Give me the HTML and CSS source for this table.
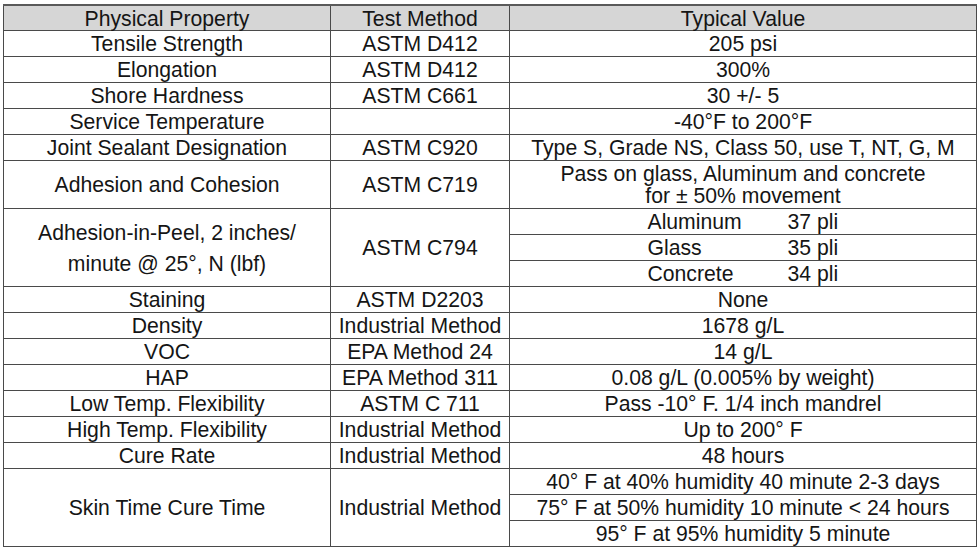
FILE: index.html
```html
<!DOCTYPE html>
<html>
<head>
<meta charset="utf-8">
<link rel="stylesheet" href="styles.css">
</head>
<body>
<table class="spec">
  <colgroup>
    <col class="c1"><col class="c2"><col class="c3">
  </colgroup>
  <thead>
    <tr class="head"><th>Physical Property</th><th>Test Method</th><th>Typical Value</th></tr>
  </thead>
  <tbody>
    <tr><td>Tensile Strength</td><td>ASTM D412</td><td>205 psi</td></tr>
    <tr><td>Elongation</td><td>ASTM D412</td><td>300%</td></tr>
    <tr><td>Shore Hardness</td><td>ASTM C661</td><td>30 +/- 5</td></tr>
    <tr><td>Service Temperature</td><td></td><td>-40°F to 200°F</td></tr>
    <tr><td>Joint Sealant Designation</td><td>ASTM C920</td><td>Type S, Grade NS, Class 50, use T, NT, G, M</td></tr>
    <tr><td>Adhesion and Cohesion</td><td>ASTM C719</td><td class="two">Pass on glass, Aluminum and concrete<br>for ± 50% movement</td></tr>
    <tr><td rowspan="3" class="tall">Adhesion-in-Peel, 2 inches/<br>minute @ 25°, N (lbf)</td><td rowspan="3">ASTM C794</td><td><span class="pair"><span class="lbl">Aluminum</span><span class="num">37 pli</span></span></td></tr>
    <tr><td><span class="pair"><span class="lbl">Glass</span><span class="num">35 pli</span></span></td></tr>
    <tr><td><span class="pair"><span class="lbl">Concrete</span><span class="num">34 pli</span></span></td></tr>
    <tr><td>Staining</td><td>ASTM D2203</td><td>None</td></tr>
    <tr><td>Density</td><td>Industrial Method</td><td>1678 g/L</td></tr>
    <tr><td>VOC</td><td>EPA Method 24</td><td>14 g/L</td></tr>
    <tr><td>HAP</td><td>EPA Method 311</td><td>0.08 g/L (0.005% by weight)</td></tr>
    <tr><td>Low Temp. Flexibility</td><td>ASTM C 711</td><td>Pass -10° F. 1/4 inch mandrel</td></tr>
    <tr><td>High Temp. Flexibility</td><td>Industrial Method</td><td>Up to 200° F</td></tr>
    <tr><td>Cure Rate</td><td>Industrial Method</td><td>48 hours</td></tr>
    <tr><td rowspan="3">Skin Time Cure Time</td><td rowspan="3">Industrial Method</td><td>40° F at 40% humidity 40 minute 2-3 days</td></tr>
    <tr><td>75° F at 50% humidity 10 minute &lt; 24 hours</td></tr>
    <tr><td>95° F at 95% humidity 5 minute</td></tr>
  </tbody>
</table>
</body>
</html>
```
FILE: styles.css
```css
html, body {
  margin: 0;
  padding: 0;
  background: #ffffff;
}
body {
  padding: 4px 0 0 3px;
  font-family: "Liberation Sans", Arial, sans-serif;
  color: #151515;
}
.spec {
  border-collapse: collapse;
  table-layout: fixed;
  width: 973px;
  font-size: 21.2px;
  border: 1px solid #4a4a4a;
  border-top: 2px solid #5a5a5a;
}
.c1 { width: 327px; }
.c2 { width: 179px; }
.c3 { width: 467px; }
.spec th, .spec td {
  border: 1px solid #4a4a4a;
  padding: 1px 0 0;
  line-height: 24px;
  text-align: center;
  vertical-align: middle;
  font-weight: normal;
  white-space: nowrap;
}
.head th {
  background: #d6d6d6;
  line-height: 23px;
}
.spec td.two {
  line-height: 22px;
  padding: 2px 0 1px;
}
.spec td.tall {
  line-height: 31px;
}
.pair {
  display: inline-block;
  width: 191px;
  text-align: left;
}
.lbl {
  display: inline-block;
  width: 140px;
}
```
